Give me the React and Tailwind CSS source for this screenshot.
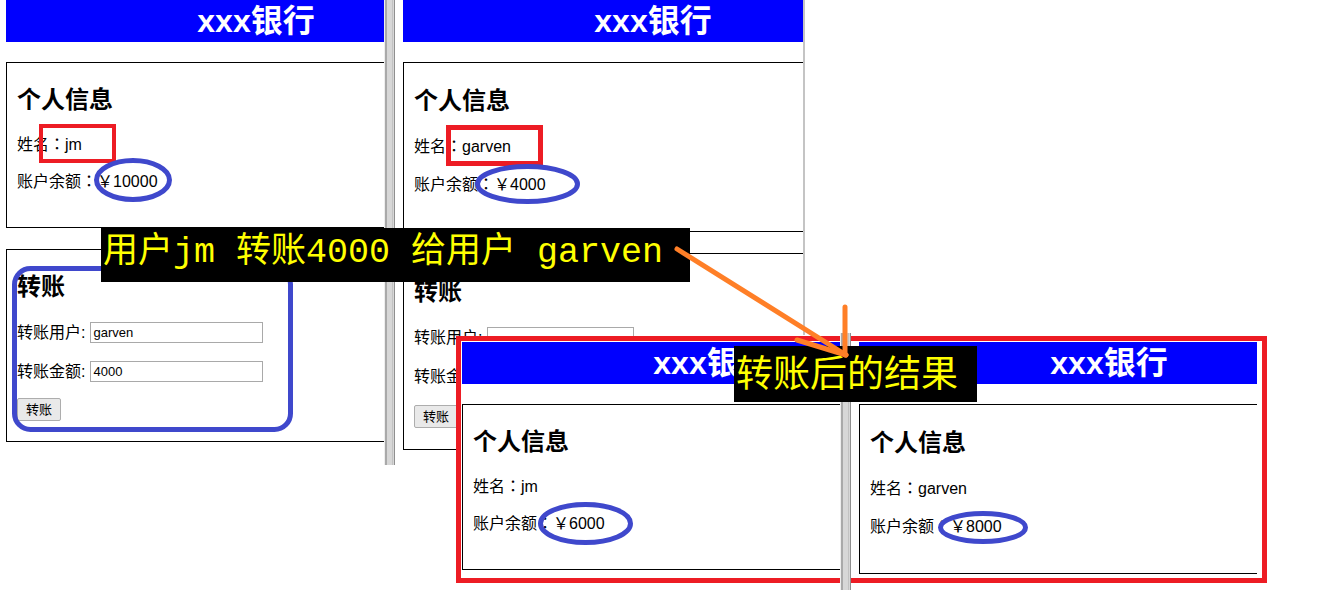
const SANS = "font-['Liberation_Sans','Noto_Sans_CJK_SC',sans-serif]"

function Scrollbar({ className }) {
  return (
    <div className={`absolute ${className} flex bg-[#d7d7d7] border-l border-r border-l-[#eeeeee] border-r-[#8f8f8f]`}>
      <div className="w-[2px] bg-[#a9a9a9]" />
      <div className="ml-[5px] w-[1px] bg-[#c2c2c2]" />
    </div>
  )
}

// fullwidth colon, centred like the page font does it
function Colon() {
  return <span className="leading-[0] font-['Noto_Sans_CJK_TC',sans-serif]">：</span>
}

function InfoBox({ name, balance, tall }) {
  return (
    <div className={`border border-black pl-[10px] flex flex-col ${tall ? 'h-[170px] pt-[24px]' : 'h-[166px] pt-[23px]'}`}>
      <h2 className="text-[24px] leading-[28px] font-bold">个人信息</h2>
      <p className={`text-[16px] leading-[20px] ${tall ? 'mt-[22px]' : 'mt-[21px]'}`}>姓名<Colon />{name}</p>
      <p className={`text-[16px] leading-[20px] ${tall ? 'mt-[18px]' : 'mt-[17px]'}`}>账户余额<Colon />￥{balance}</p>
    </div>
  )
}

function Field({ label, value, width, className }) {
  return (
    <div className={`flex items-center h-[21px] text-[16px] ${className}`}>
      <span>{label}</span>
      <input
        readOnly
        value={value}
        style={{ width }}
        className="ml-[5px] h-[21px] border border-[#a9a9a9] px-[2px] text-[13px] text-black bg-white outline-none"
      />
    </div>
  )
}

function TransferBox({ user, amount, inputW, tall }) {
  return (
    <div className={`mt-[21px] border border-black pl-[10px] flex flex-col ${tall ? 'h-[197px] pt-[24px]' : 'h-[193px] pt-[23px]'}`}>
      <h2 className="text-[24px] leading-[28px] font-bold">转账</h2>
      <Field label="转账用户:" value={user} width={inputW} className="mt-[21px]" />
      <Field label="转账金额:" value={amount} width={inputW} className="mt-[18px]" />
      <button className={`self-start h-[23px] px-[8px] text-[13px] border border-[#adadad] rounded-[2px] bg-[#e9e9e9] ${tall ? 'mt-[18px]' : 'mt-[16px]'}`}>
        转账
      </button>
    </div>
  )
}

function BankWindow({ className, name, balance, tall, transfer }) {
  return (
    <div className={`${className} overflow-hidden bg-white`}>
      <div className="w-[500px]">
        <div className="h-[42px] bg-[#0000ff] flex items-center justify-center text-white text-[32px] font-bold">
          xxx银行
        </div>
        <div className="mt-[20px]">
          <InfoBox name={name} balance={balance} tall={tall} />
        </div>
        {transfer && <TransferBox {...transfer} tall={tall} />}
      </div>
    </div>
  )
}

export default function App() {
  return (
    <div className={`relative w-[1344px] h-[615px] bg-white overflow-hidden text-black ${SANS}`}>
      {/* before transfer */}
      <BankWindow
        className="absolute left-[6px] top-0 w-[378px] h-[465px]"
        name="jm"
        balance="10000"
        transfer={{ user: 'garven', amount: '4000', inputW: 173 }}
      />
      <Scrollbar className="left-[384px] top-0 w-[11px] h-[465px]" />

      <BankWindow
        className="absolute left-[403px] top-0 w-[400px] h-[465px]"
        name="garven"
        balance="4000"
        tall
        transfer={{ user: '', amount: '', inputW: 147 }}
      />
      <div className="absolute left-[803px] top-0 w-[2px] h-[335px] bg-[#c4c4c4]" />

      {/* after transfer */}
      <div className="absolute left-[456px] top-[336px] w-[811px] h-[247px] border-[5px] border-[#ed1c24] bg-white p-[1px] flex">
        <BankWindow className="w-[378px] h-full shrink-0" name="jm" balance="6000" />
        <div className="w-[19px] shrink-0" />
        <BankWindow className="w-[398px] h-full shrink-0" name="garven" balance="8000" tall />
      </div>
      <Scrollbar className="left-[840px] top-[333px] w-[11px] h-[257px]" />

      {/* markup */}
      <svg className="absolute left-0 top-0 pointer-events-none" width="1344" height="615" fill="none">
        <rect x="41" y="126" width="73" height="35" stroke="#ed1c24" strokeWidth="4" />
        <rect x="448.5" y="127.5" width="92" height="36" stroke="#ed1c24" strokeWidth="5" />
        <ellipse cx="133" cy="180" rx="36.5" ry="19.5" stroke="#3f48cc" strokeWidth="5" />
        <ellipse cx="527.5" cy="184" rx="50" ry="17.5" stroke="#3f48cc" strokeWidth="5" />
        <ellipse cx="585.5" cy="523.5" rx="45" ry="19" stroke="#3f48cc" strokeWidth="5" />
        <ellipse cx="983" cy="527.5" rx="42.5" ry="14" stroke="#3f48cc" strokeWidth="5" />
        <rect x="14.5" y="268.5" width="276" height="161" rx="16" stroke="#3f48cc" strokeWidth="5" />
      </svg>

      <div className="absolute left-[101px] top-[228px] w-[589px] h-[54px] bg-black text-[#ffff00] text-[35px] leading-none flex items-center pl-[2px] pb-[4px] whitespace-pre font-['Liberation_Mono','Noto_Sans_CJK_SC',monospace]">
        用户jm 转账4000 给用户 garven
      </div>
      <div className="absolute left-[734px] top-[346px] w-[243px] h-[56px] bg-black text-[#ffff00] text-[37px] leading-none flex items-center pl-[2px] pb-[6px] font-['Noto_Sans_CJK_SC',sans-serif]">
        转账后的结果
      </div>

      <svg className="absolute left-0 top-0 pointer-events-none" width="1344" height="615" fill="none" stroke="#ff7f27" strokeWidth="5" strokeLinecap="round">
        <line x1="677" y1="249" x2="846" y2="355" />
        <line x1="845" y1="307" x2="845" y2="355" />
        <line x1="797" y1="340" x2="846" y2="355" />
      </svg>
    </div>
  )
}
